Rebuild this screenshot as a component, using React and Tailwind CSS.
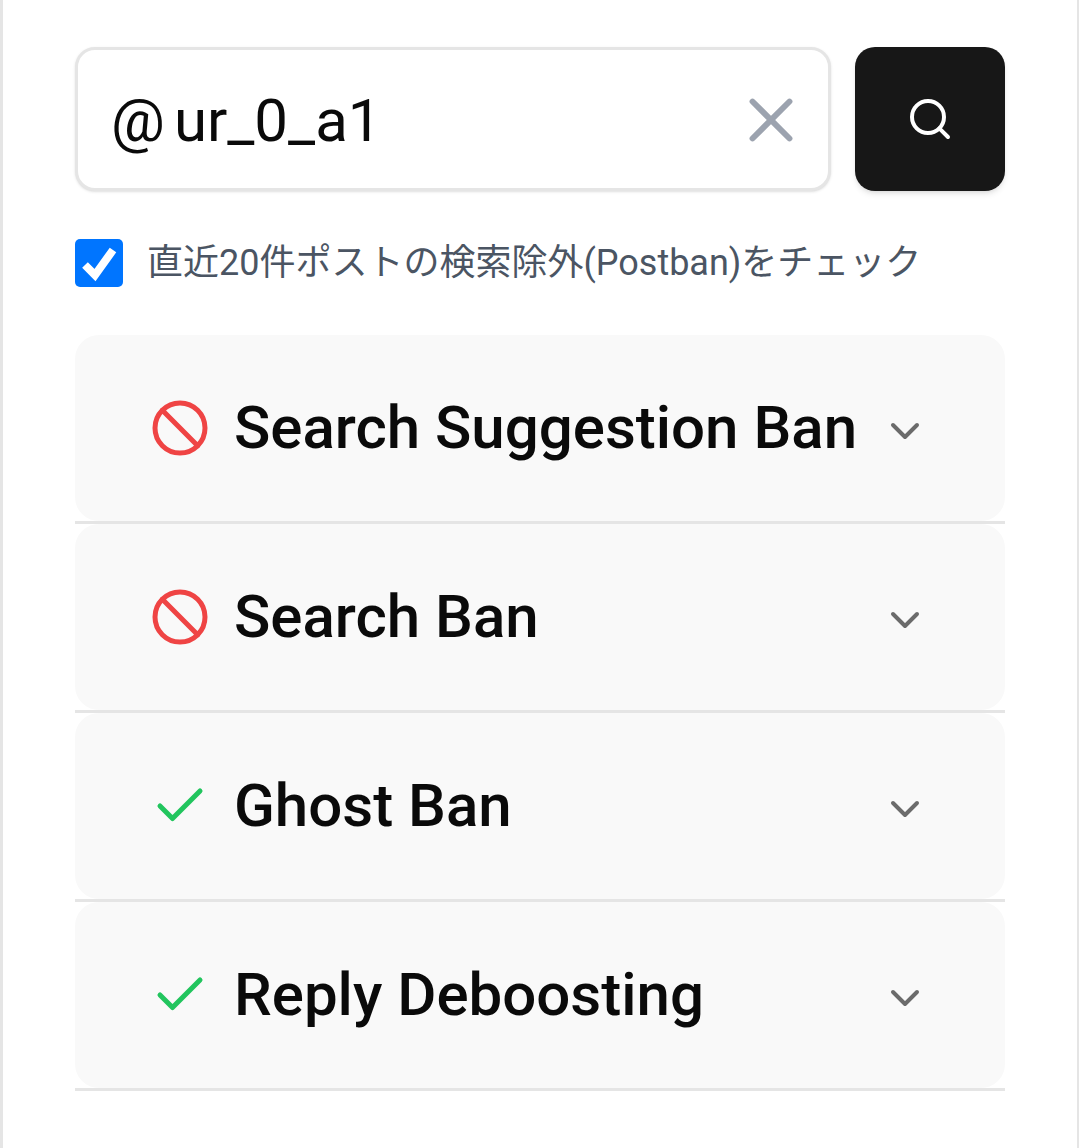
import { Ban, Check, ChevronDown, Search, X } from 'lucide-react';

const checks = [
  { name: 'Search Suggestion Ban', banned: true },
  { name: 'Search Ban', banned: true },
  { name: 'Ghost Ban', banned: false },
  { name: 'Reply Deboosting', banned: false },
];

export default function App() {
  return (
    <div className="min-h-screen bg-white border-l-[3px] border-r-[2px] border-[#e5e5e5] pt-[47px] pl-[72px] pr-[72px] font-['Roboto','Noto_Sans_CJK_JP',sans-serif]">
      {/* Search bar */}
      <div className="flex gap-[24px]">
        <div className="flex-1 h-[144px] flex items-center pl-[33px] pr-[20px] bg-white border-[3px] border-[#e5e5e5] rounded-[20px] shadow-sm">
          <span className="text-[60px] text-[#0a0a0a] mr-[9px] mt-[3px]">@</span>
          <span className="flex-1 text-[60px] text-[#0a0a0a] mt-[3px]">ur_0_a1</span>
          <X size={74} strokeWidth={1.9} className="text-[#9ca3af] mt-[2px]" />
        </div>
        <button className="w-[150px] h-[144px] flex items-center justify-center bg-[#171717] text-white rounded-[20px] shadow-md">
          <Search size={48} strokeWidth={2} />
        </button>
      </div>

      {/* Postban option */}
      <label className="mt-[45px] flex items-center gap-[24px]">
        <span className="relative w-[48px] h-[48px]">
          <input type="checkbox" defaultChecked className="block w-[48px] h-[48px] m-0 appearance-none bg-[#0075ff] rounded-[5px]" />
          <svg viewBox="0 0 48 48" className="absolute inset-0 w-[48px] h-[48px]" fill="none" stroke="white" strokeWidth="8">
            <polyline points="10,26 20,36 38,11" />
          </svg>
        </span>
        <span className="text-[36px] text-[#4b5563]">直近20件ポストの検索除外(Postban)をチェック</span>
      </label>

      {/* Results */}
      <div className="mt-[45px]">
        {checks.map((item) => (
          <div key={item.name} className="border-b-[3px] border-[#e5e5e5]">
            <div className="h-[186px] flex items-center pl-[75px] pr-[76px] bg-[#f9f9f9] rounded-[24px]">
              {item.banned ? (
                <Ban size={60} strokeWidth={2} className="text-[#ef4444]" />
              ) : (
                <Check size={60} strokeWidth={2} className="text-[#22c55e]" />
              )}
              <span className="flex-1 ml-[24px] text-[60px] font-medium text-[#0a0a0a] whitespace-nowrap">{item.name}</span>
              <ChevronDown size={48} strokeWidth={2} className="text-[#6b6b6b] mt-[5px]" />
            </div>
          </div>
        ))}
      </div>
    </div>
  );
}
